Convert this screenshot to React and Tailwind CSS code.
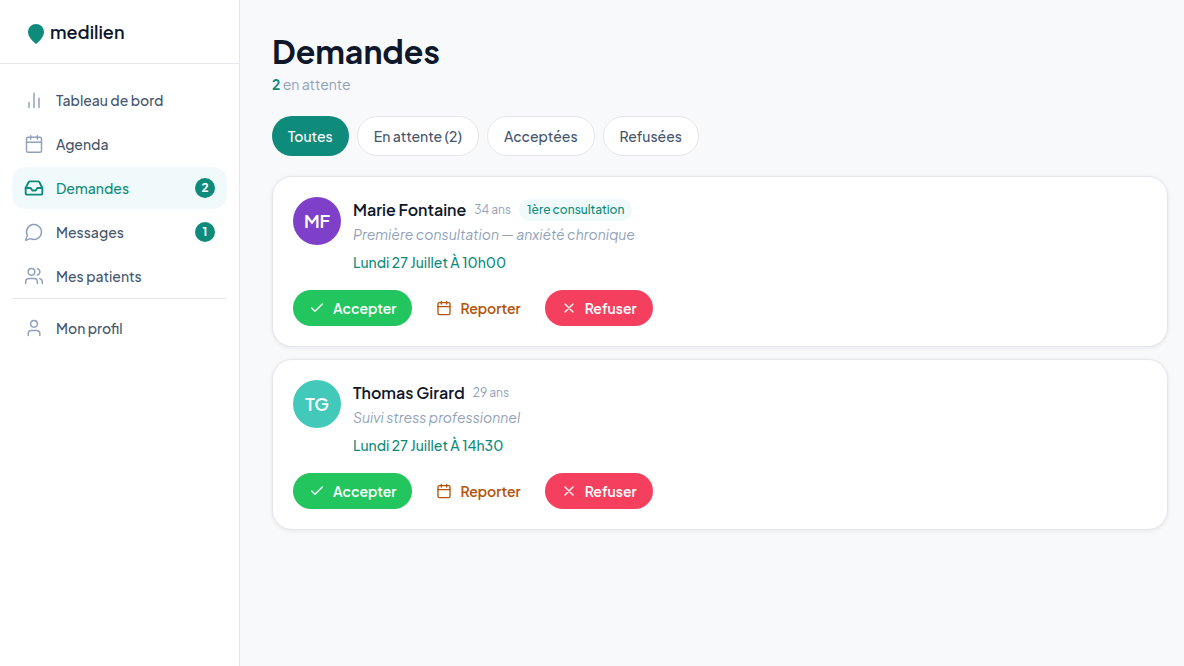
import React, { useState } from 'react';

const navItems = [
  { id: 'dashboard', label: 'Tableau de bord', icon: 'chart' },
  { id: 'agenda', label: 'Agenda', icon: 'calendar' },
  { id: 'demandes', label: 'Demandes', icon: 'inbox', count: 2, active: true },
  { id: 'messages', label: 'Messages', icon: 'message', count: 1 },
  { id: 'patients', label: 'Mes patients', icon: 'users' },
];

const filters = ['Toutes', 'En attente (2)', 'Acceptées', 'Refusées'];

const requests = [
  {
    id: 1,
    initials: 'MF',
    name: 'Marie Fontaine',
    age: '34 ans',
    first: true,
    reason: 'Première consultation — anxiété chronique',
    date: 'Lundi 27 Juillet À 10h00',
    color: 'bg-[#7e40c8]',
  },
  {
    id: 2,
    initials: 'TG',
    name: 'Thomas Girard',
    age: '29 ans',
    first: false,
    reason: 'Suivi stress professionnel',
    date: 'Lundi 27 Juillet À 14h30',
    color: 'bg-[#42c9b9]',
  },
];

const shapes = {
  chart: <path d="M6 21v-6M12 21V4M18 21V10" />,
  calendar: (
    <>
      <rect x="3" y="4" width="18" height="18" rx="2" />
      <path d="M16 2v4M8 2v4M3 10h18" />
    </>
  ),
  inbox: (
    <>
      <path d="M22 12h-6l-2 3h-4l-2-3H2" />
      <path d="M5.45 5.11 2 12v6a2 2 0 0 0 2 2h16a2 2 0 0 0 2-2v-6l-3.45-6.89A2 2 0 0 0 16.76 4H7.24a2 2 0 0 0-1.79 1.11z" />
    </>
  ),
  message: <path d="M7.9 20A9 9 0 1 0 4 16.1L2 22Z" />,
  users: (
    <>
      <path d="M16 21v-2a4 4 0 0 0-4-4H6a4 4 0 0 0-4 4v2" />
      <circle cx="9" cy="7" r="4" />
      <path d="M22 21v-2a4 4 0 0 0-3-3.87M16 3.13a4 4 0 0 1 0 7.75" />
    </>
  ),
  user: (
    <>
      <path d="M19 21v-2a4 4 0 0 0-4-4H9a4 4 0 0 0-4 4v2" />
      <circle cx="12" cy="7" r="4" />
    </>
  ),
  check: <path d="M20 6 9 17l-5-5" />,
  close: <path d="M18 6 6 18M6 6l12 12" />,
};

function Icon({ name, className, strokeWidth = 1.75 }) {
  return (
    <svg
      viewBox="0 0 24 24"
      fill="none"
      stroke="currentColor"
      strokeWidth={strokeWidth}
      strokeLinecap="round"
      strokeLinejoin="round"
      aria-hidden="true"
      className={`shrink-0 ${className}`}
    >
      {shapes[name]}
    </svg>
  );
}

function NavLink({ item }) {
  return (
    <a
      href={`#${item.id}`}
      className={`flex items-center gap-3 h-[42px] px-3 rounded-[14px] text-sm font-medium ${
        item.active ? 'bg-[#f0fafa] text-[#0f8b7b]' : 'text-slate-600'
      }`}
    >
      <Icon
        name={item.icon}
        strokeWidth={item.active ? 2.25 : 1.75}
        className={item.active ? 'size-5' : 'size-5 text-slate-400'}
      />
      <span className="flex-1">{item.label}</span>
      {item.count ? (
        <span className="size-5 rounded-full bg-[#0f8b7b] text-white text-xs font-bold flex items-center justify-center">
          {item.count}
        </span>
      ) : null}
    </a>
  );
}

function Sidebar() {
  return (
    <aside className="w-60 shrink-0 bg-white border-r border-gray-200">
      <div className="h-16 flex items-center gap-1.5 px-7 border-b border-gray-200">
        <svg viewBox="0 0 16 20" className="w-4 h-5 mt-1" aria-hidden="true">
          <path d="M8 0a8 8 0 0 1 8 8c0 5-5 9.500-8 12C5 17.500 0 13 0 8a8 8 0 0 1 8-8z" fill="#0f8b7b" />
        </svg>
        <span className="text-lg leading-6 font-semibold text-slate-900">medilien</span>
      </div>
      <nav className="px-3 pt-[15px]">
        <div className="flex flex-col gap-0.5">
          {navItems.map((item) => (
            <NavLink key={item.id} item={item} />
          ))}
        </div>
        <div className="mt-px pt-2 border-t border-gray-200">
          <NavLink item={{ id: 'profil', label: 'Mon profil', icon: 'user' }} />
        </div>
      </nav>
    </aside>
  );
}

function ActionButton({ icon, label, className }) {
  return (
    <button
      type="button"
      className={`h-9 px-4 rounded-full flex items-center gap-2 text-sm leading-[22px] font-semibold ${className}`}
    >
      <Icon name={icon} className="size-4" strokeWidth={2} />
      {label}
    </button>
  );
}

function RequestCard({ request }) {
  return (
    <article className="bg-white border border-gray-200 rounded-[20px] p-5 shadow-[0_1px_4px_rgba(15,23,42,0.08)]">
      <div className="flex gap-3">
        <div
          className={`size-12 shrink-0 rounded-full flex items-center justify-center text-white text-lg leading-6 font-semibold ${request.color}`}
        >
          {request.initials}
        </div>
        <div>
          <div className="flex items-center gap-2 h-[26px]">
            <h2 className="text-base font-semibold text-slate-900">{request.name}</h2>
            <span className="text-xs text-slate-400">{request.age}</span>
            {request.first && (
              <span className="px-2 rounded-full bg-[#f0fafa] text-[#0f8b7b] text-xs leading-[22px] font-medium">
                1ère consultation
              </span>
            )}
          </div>
          <p className="text-sm leading-[22px] italic text-slate-400">{request.reason}</p>
          <p className="mt-1.5 text-sm leading-[22px] font-medium text-[#0f8b7b]">{request.date}</p>
        </div>
      </div>
      <div className="flex gap-2 mt-[17px]">
        <ActionButton icon="check" label="Accepter" className="bg-[#22c55e] text-white" />
        <ActionButton icon="calendar" label="Reporter" className="text-[#b45309]" />
        <ActionButton icon="close" label="Refuser" className="bg-[#f43f5e] text-white" />
      </div>
    </article>
  );
}

function App() {
  const [filter, setFilter] = useState('Toutes');

  return (
    <div className="min-h-screen flex bg-[#f8f9fb] font-['Plus_Jakarta_Sans',Inter,sans-serif]">
      <Sidebar />
      <main className="flex-1 pt-[31px] pl-8 pr-4">
        <h1 className="text-[32px] leading-10 font-bold text-slate-900">Demandes</h1>
        <p className="mt-0.5 text-sm leading-[22px] text-slate-400">
          <span className="font-bold text-[#0f8b7b]">2</span> en attente
        </p>
        <div className="flex gap-2 mt-[21px]">
          {filters.map((label) => (
            <button
              key={label}
              type="button"
              onClick={() => setFilter(label)}
              className={`h-10 px-4 rounded-full text-sm leading-[22px] font-medium ${
                filter === label
                  ? 'bg-[#0f8b7b] text-white'
                  : 'bg-white border border-gray-200 text-slate-600'
              }`}
            >
              {label}
            </button>
          ))}
        </div>
        <div className="flex flex-col gap-3 mt-5">
          {requests.map((request) => (
            <RequestCard key={request.id} request={request} />
          ))}
        </div>
      </main>
    </div>
  );
}

export default App;
